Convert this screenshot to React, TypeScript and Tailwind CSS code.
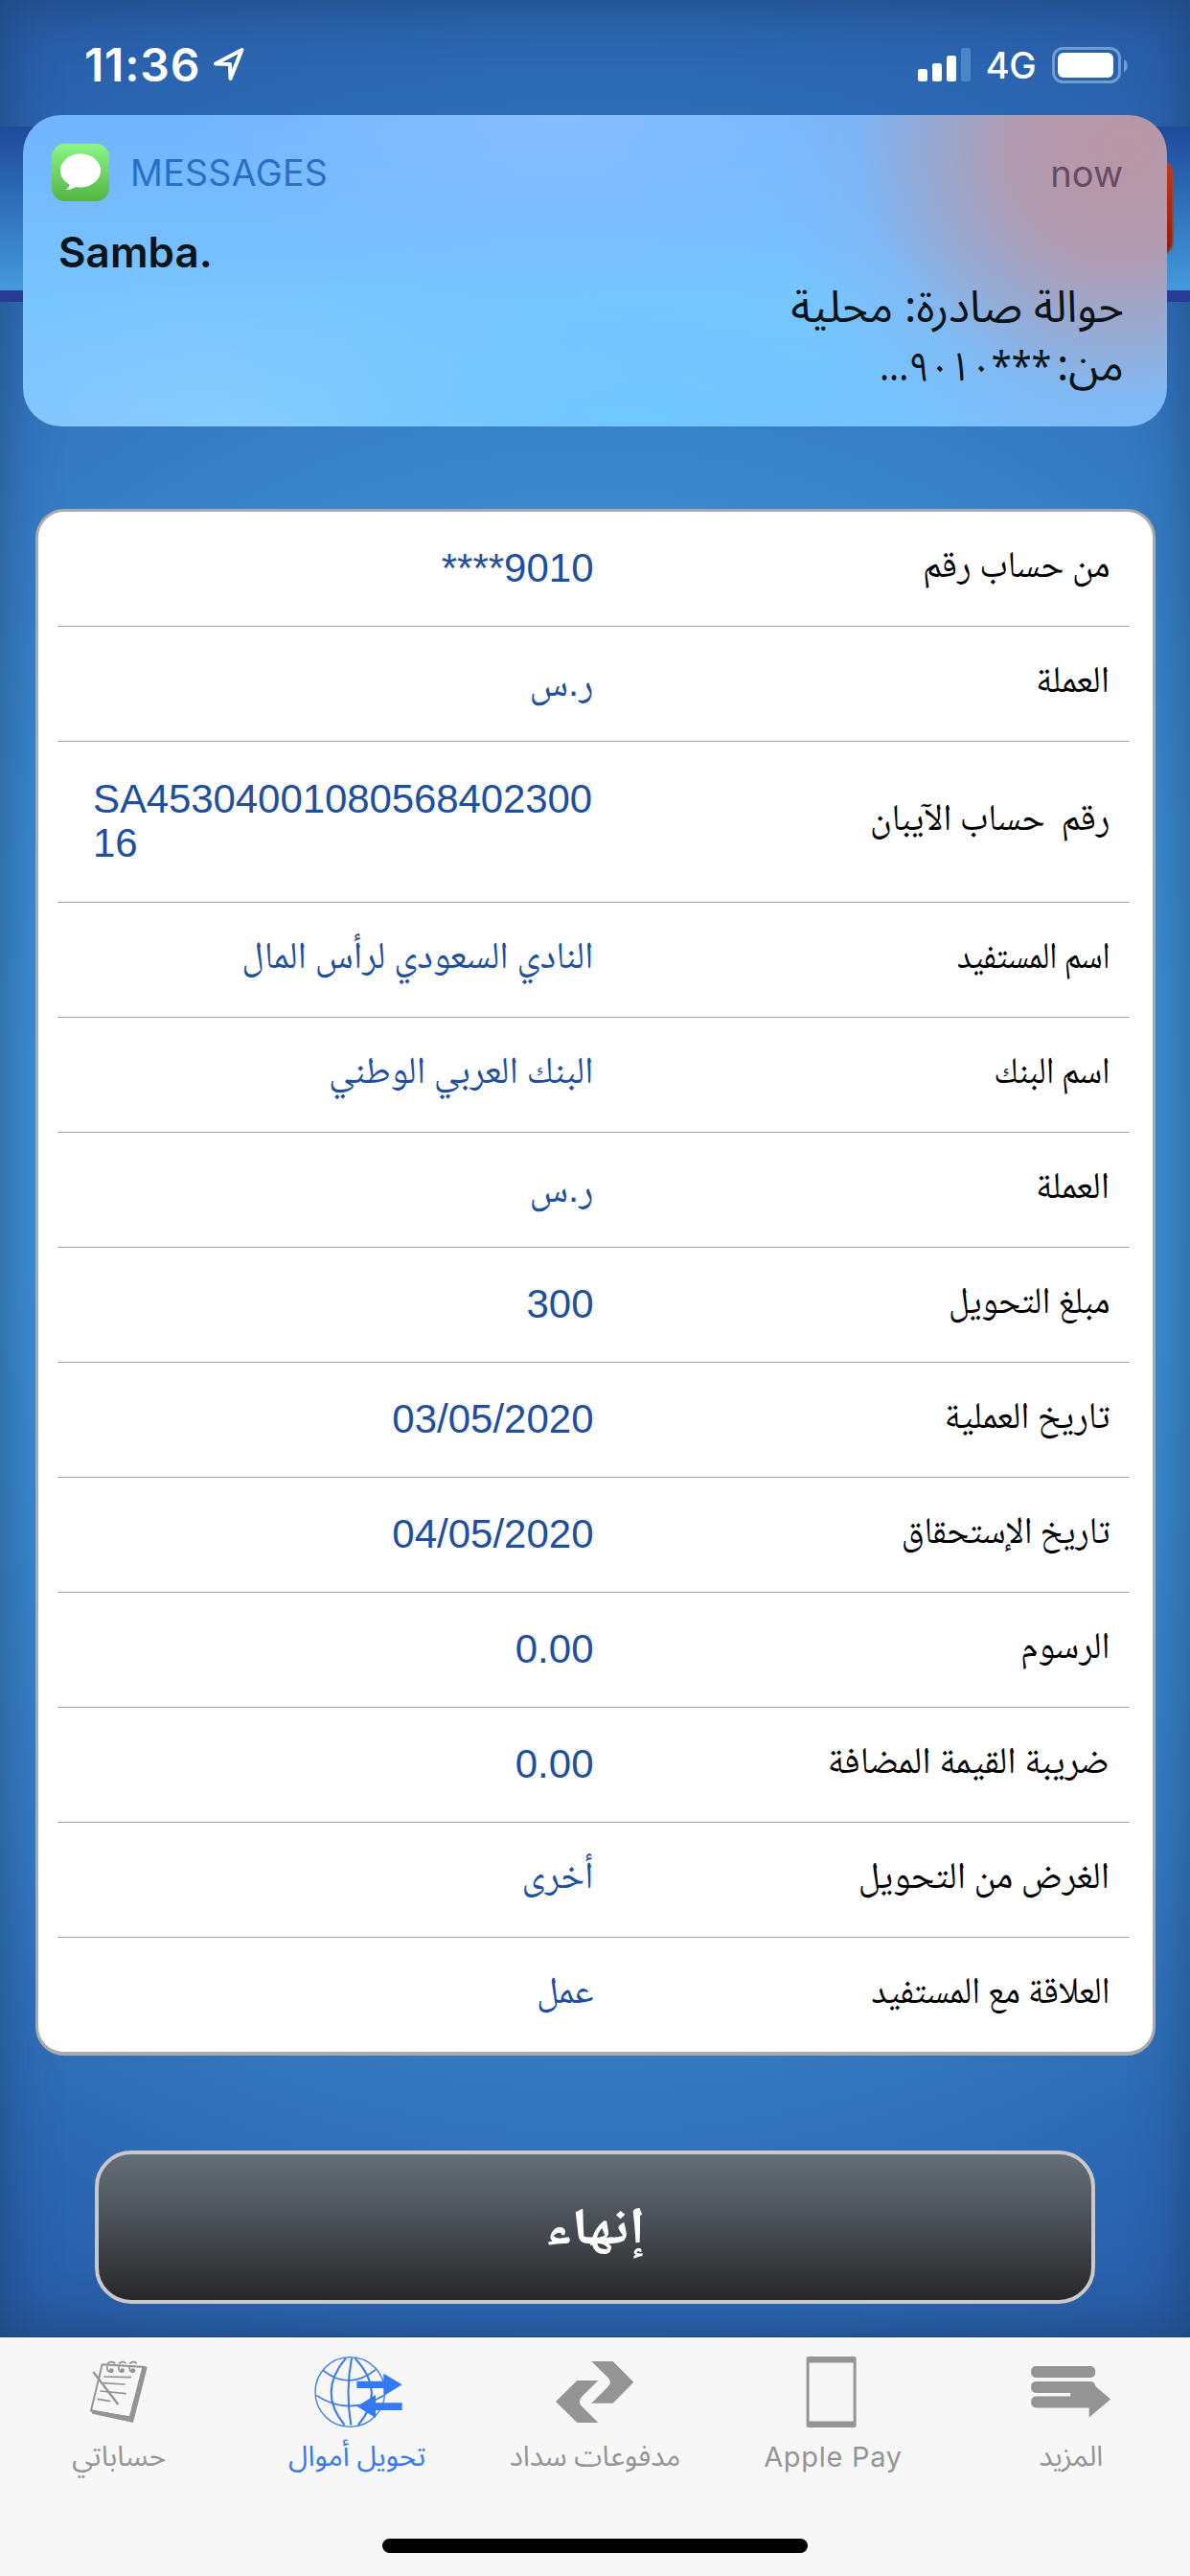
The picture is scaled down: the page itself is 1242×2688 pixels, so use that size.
import React from 'react';
import clsx from 'clsx';

interface Field {
  label: string;
  value: string;
  kind: 'latin' | 'arabic' | 'currency';
  tall?: boolean;
  fit?: string;
}

const fields: Field[] = [
  { label: 'من حساب رقم', value: '****9010', kind: 'latin', fit: 'scale-x-[0.975]' },
  { label: 'العملة', value: 'ر.س', kind: 'currency' },
  { label: 'رقم  حساب الآيبان', value: 'SA4530400108056840230016', kind: 'latin', tall: true, fit: 'scale-x-[0.98]' },
  { label: 'اسم المستفيد', value: 'النادي السعودي لرأس المال', kind: 'arabic', fit: 'scale-x-[0.86]' },
  { label: 'اسم البنك', value: 'البنك العربي الوطني', kind: 'arabic', fit: 'scale-x-[0.91]' },
  { label: 'العملة', value: 'ر.س', kind: 'currency' },
  { label: 'مبلغ التحويل', value: '300', kind: 'latin', fit: 'scale-x-[0.945]' },
  { label: 'تاريخ العملية', value: '03/05/2020', kind: 'latin', fit: 'scale-x-[0.975]' },
  { label: 'تاريخ الإستحقاق', value: '04/05/2020', kind: 'latin', fit: 'scale-x-[0.94]' },
  { label: 'الرسوم', value: '0.00', kind: 'latin', fit: 'scale-x-[0.97]' },
  { label: 'ضريبة القيمة المضافة', value: '0.00', kind: 'latin' },
  { label: 'الغرض من التحويل', value: 'أخرى', kind: 'arabic' },
  { label: 'العلاقة مع المستفيد', value: 'عمل', kind: 'arabic', fit: 'scale-x-[0.935]' },
];

const valueClass = {
  latin: "font-['Liberation_Sans',sans-serif] text-[42px] leading-[46px] pb-[2px]",
  arabic: "font-['Noto_Naskh_Arabic','DejaVu_Sans_Condensed',sans-serif] text-[39.5px] leading-[46px]",
  currency: "font-['Liberation_Sans','Noto_Naskh_Arabic','DejaVu_Sans_Condensed',sans-serif] text-[40px] leading-[46px] pb-[3px]",
};

const StatusBar: React.FC = () => (
  <div className="flex h-[132px] items-start justify-between pt-[44px] pr-[65px] pl-[88px] text-white">
    <div className="flex items-center">
      <span className="text-[48px] leading-[48px] font-semibold tracking-[0.8px]">11:36</span>
      <svg className="ml-[13px] h-[38px] w-[34px]" viewBox="0 0 34 38" fill="none">
        <path d="M3 17.5 30.5 3 18.5 33 18 18Z" stroke="white" strokeWidth="4" strokeLinejoin="round" />
      </svg>
    </div>
    <div className="flex h-[48px] items-center">
      <svg className="h-[36px] w-[55px]" viewBox="0 0 55 36" fill="white">
        <rect x="0" y="22" width="10" height="13" rx="2.5" />
        <rect x="15" y="16" width="10" height="19" rx="2.5" />
        <rect x="30" y="8" width="10" height="27" rx="2.5" />
        <rect x="45" y="0" width="10" height="35" rx="2.5" fill="#4a86c3" />
      </svg>
      <span className="ml-[16px] text-[38px] leading-[48px] font-medium tracking-[-0.6px]">4G</span>
      <svg className="ml-[17px] h-[38px] w-[79px]" viewBox="0 0 79 38">
        <rect x="1.5" y="1.5" width="69" height="35" rx="10" fill="none" stroke="#6d9fd2" strokeWidth="3" />
        <rect x="6" y="6" width="58" height="26" rx="6" fill="white" />
        <path d="M75 13c5 2 5 11 0 13Z" fill="#6d9fd2" />
      </svg>
    </div>
  </div>
);

const Notification: React.FC = () => (
  <div className="absolute top-[120px] left-[24px] h-[325px] w-[1194px] rounded-[40px] bg-[radial-gradient(ellipse_370px_350px_at_1150px_35px,#b996a4_0%,#b19bb0_32%,rgba(157,166,202,0.85)_55%,rgba(135,178,235,0.5)_75%,rgba(124,190,255,0)_100%),radial-gradient(ellipse_420px_190px_at_560px_0px,#86bdff,rgba(134,189,255,0)),radial-gradient(ellipse_520px_220px_at_640px_325px,#70c7ff,rgba(112,199,255,0)),radial-gradient(ellipse_420px_160px_at_250px_325px,#8bcfff,rgba(139,207,255,0)),linear-gradient(#71b4ff,#78c4ff_60%,#7cbfff)]">
    <div className="mt-[30px] flex h-[60px] items-center pr-[46px] pl-[30px]">
      <div className="flex size-[60px] items-center justify-center rounded-[14px] bg-linear-to-b from-[#8bf686] to-[#52b541]">
        <svg className="h-[40px] w-[44px]" viewBox="0 0 44 40" fill="white">
          <ellipse cx="22" cy="18" rx="21" ry="17.5" />
          <path d="M11 30c0 4-1.500 6-4 8 5 0 9-2 11-4Z" />
        </svg>
      </div>
      <span className="ml-[22px] flex-1 pt-[3px] text-[37.5px] tracking-[0.3px] text-[#2a6fc6]">MESSAGES</span>
      <span className="pt-[2px] text-[38px] text-[#654a66]">now</span>
    </div>
    <div className="mt-[26px] pl-[37px] text-[44px] leading-[54px] font-semibold text-[#0b1419]">Samba.</div>
    <div
      dir="rtl"
      className="mt-px pr-[45px] font-['Noto_Sans_Arabic','DejaVu_Sans_Condensed',sans-serif] text-[46px] leading-[61px] text-[#0b1419]"
    >
      <p>حوالة صادرة: محلية</p>
      <p>
        من:<span className="mr-[6px] inline-block origin-right scale-x-[0.9] text-[42px] tracking-[-3.2px]">***٩٠١٠...</span>
      </p>
    </div>
  </div>
);

const DetailsCard: React.FC = () => (
  <div className="mr-[36px] ml-[37px] rounded-[30px] border-[3px] border-b-4 border-[#aaaaaa] bg-white pr-[24px] pl-[20px]">
    {fields.map((field, i) => (
      <div
        key={i}
        dir="rtl"
        className={clsx(
          'flex items-center pr-[21px] pl-[35px]',
          field.tall ? 'h-[168px]' : 'h-[120px]',
          i < fields.length - 1 ? 'border-b border-[#aaaaaa]' : '-mb-px'
        )}
      >
        <span
          className={clsx(
            "w-[539px] origin-right font-['Noto_Naskh_Arabic','DejaVu_Sans_Condensed',sans-serif] text-[39px] leading-[46px] whitespace-pre text-black",
            field.fit
          )}
        >
          {field.label}
        </span>
        <span
          dir={field.kind === 'latin' ? 'ltr' : 'rtl'}
          className={clsx(
            'w-[525px] text-[#204f9e]',
            valueClass[field.kind],
            field.kind === 'latin' && !field.tall && 'text-right',
            field.tall && 'pl-[2px] tracking-[-0.1px] break-all'
          )}
        >
          {field.value}
        </span>
      </div>
    ))}
  </div>
);

const NotebookIcon = () => (
  <svg className="h-[74px] w-[100px]" viewBox="-17 27 300 222" fill="none" stroke="currentColor">
    <path d="M81 52 215 60 173 219 46 196Z" strokeWidth="6" />
    <path d="M206 60 222 61 178 234 50 206 46 195 166 214Z" fill="currentColor" stroke="none" />
    <path d="M86 90 172 92M83 110 153 114M74 135 156 143M66 160 107 167" strokeWidth="5" />
    <path d="M53 75 131 177" strokeWidth="7" />
    <path d="M97 49c8-8 20-6 25 0M133 49c8-8 18-6 22 0M167 49c8-8 18-6 22 0M97 56c-2 10 2 18 10 20M133 56c-2 10 2 18 8 20M167 56c-2 10 2 18 10 20" strokeWidth="5" />
    <g fill="currentColor" stroke="none">
      <circle cx="110" cy="71" r="7" />
      <circle cx="144" cy="71" r="7" />
      <circle cx="178" cy="71" r="7" />
    </g>
  </svg>
);

const TransferIcon = () => (
  <svg className="h-[74px] w-[100px]" viewBox="728 27 300 222" fill="none" stroke="currentColor">
    <circle cx="855" cy="138" r="109" strokeWidth="4" />
    <path d="M860 32Q840 138 858 242" strokeWidth="6" />
    <path d="M842 32Q752 138 838 242M870 32Q970 138 880 242" strokeWidth="6" />
    <path d="M770 70Q853 135 935 68M750 149Q850 215 960 149" strokeWidth="5" />
    <path d="M876 104H960V80L1018 115 960 151V126H876Z" fill="currentColor" stroke="none" />
    <path d="M1018 172H935V147L877 183 935 219V195H1018Z" fill="currentColor" stroke="none" />
  </svg>
);

const SadadIcon = () => (
  <svg className="h-[74px] w-[100px]" viewBox="153 27 300 222" fill="currentColor">
    <path d="M292 42H359L424 107 359 173H292L343 122Q359 107 343 92Z" />
    <path d="M313 102H247L180 168 247 234H313L262 183Q247 168 262 152Z" />
  </svg>
);

const PhoneIcon = () => (
  <svg className="h-[74px] w-[100px]" viewBox="819.4 2459 100 74" fill="currentColor">
    <path fillRule="evenodd" d="M844 2459H892Q894 2459 894 2461V2531Q894 2533 892 2533H844Q842 2533 842 2531V2461Q842 2459 844 2459ZM845 2465.500V2526.500H891V2465.500Z" />
  </svg>
);

const MoreIcon = () => (
  <svg className="h-[74px] w-[100px]" viewBox="1067.8 2459 100 74" fill="currentColor">
    <rect x="1076" y="2469" width="67" height="12" rx="5" />
    <rect x="1076" y="2485" width="67" height="12" rx="5" />
    <rect x="1076" y="2500.500" width="66" height="12" rx="5" />
    <path d="M1117 2494H1140L1143 2490 1159 2503.500 1136.500 2522.500V2512H1117Z" />
  </svg>
);

const tabs = [
  { label: 'حساباتي', icon: NotebookIcon },
  { label: 'تحويل أموال', icon: TransferIcon, active: true },
  { label: 'مدفوعات سداد', icon: SadadIcon },
  { label: 'Apple Pay', icon: PhoneIcon, latin: true },
  { label: 'المزيد', icon: MoreIcon },
];

const TabBar: React.FC = () => (
  <div className="flex h-[249px] flex-col items-center bg-[#f7f7f7]">
    <div className="flex h-[210px] w-full pt-[20px]">
      {tabs.map(({ label, icon: Icon, active, latin }) => (
        <div key={label} className={clsx('flex flex-1 flex-col items-center', active ? 'text-[#3478f6]' : 'text-[#949494]')}>
          <Icon />
          <span
            className={clsx(
              'mt-[9px] leading-[44px] whitespace-nowrap',
              latin ? 'text-[29px] tracking-[0.7px]' : "font-['Noto_Sans_Arabic','DejaVu_Sans_Condensed',sans-serif] text-[29.5px]"
            )}
          >
            {label}
          </span>
        </div>
      ))}
    </div>
    <div className="h-[15px] w-[444px] rounded-full bg-black" />
  </div>
);

export default function App() {
  return (
    <div className="h-[2688px] w-[1242px] overflow-hidden font-['Inter',sans-serif]">
      <div className="relative h-[2439px] border-b border-[#1d4377] bg-[radial-gradient(circle_at_621px_1218px,#3f92d5_0px,#3d8dd1_600px,#3882c8_780px,#357ac2_920px,#2c68b3_1160px,#285aa6_1360px)] shadow-[inset_0_0_56px_rgba(20,50,75,0.5)]">
        <StatusBar />
        <div className="flex h-[183px] items-start justify-end border-b-12 border-[#273c94] bg-linear-to-b from-[#1f4a9b] to-[#449bdb] pt-[33px] pr-[17px]">
          <div className="h-[103px] w-[180px] rounded-[16px] border-2 border-[#6a5560] bg-linear-to-b from-[#c03d1c] to-[#8f1a12]" />
        </div>
        <Notification />

        <div className="pt-[216px]">
          <DetailsCard />
        </div>

        <button className="mt-[99px] ml-[99px] flex h-[160px] w-[1044px] items-center justify-center rounded-[38px] border-4 border-[#c9c8ca] bg-linear-to-b from-[#656f79] via-[#484d54] to-[#272729] font-['Noto_Naskh_Arabic','DejaVu_Sans',sans-serif] text-[54px] font-bold text-white">
          <span className="scale-x-[1.16] pt-[10px]">إنهاء</span>
        </button>
      </div>
      <TabBar />
    </div>
  );
}
